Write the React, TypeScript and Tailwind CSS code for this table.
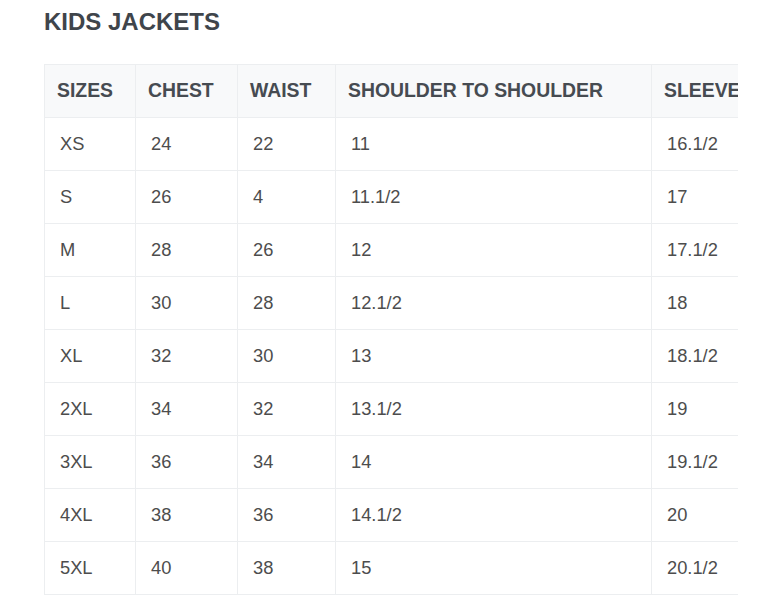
import React from "react";

const rows: string[][] = [
  ["XS", "24", "22", "11", "16.1/2"],
  ["S", "26", "4", "11.1/2", "17"],
  ["M", "28", "26", "12", "17.1/2"],
  ["L", "30", "28", "12.1/2", "18"],
  ["XL", "32", "30", "13", "18.1/2"],
  ["2XL", "34", "32", "13.1/2", "19"],
  ["3XL", "36", "34", "14", "19.1/2"],
  ["4XL", "38", "36", "14.1/2", "20"],
  ["5XL", "40", "38", "15", "20.1/2"],
];

const headers = ["SIZES", "CHEST", "WAIST", "SHOULDER TO SHOULDER", "SLEEVE LENGTH"];

export default function App() {
  return (
    <div
      className="w-[770px] h-[603px] bg-white overflow-hidden"
      style={{ fontFamily: '"Liberation Sans", Arial, sans-serif' }}
    >
      <div className="pl-[44px] pt-[8px]">
        <h2 className="text-[24px] leading-[28px] font-bold text-[#3f454b]">KIDS JACKETS</h2>
        <div className="mt-[28px] w-[694px] overflow-hidden">
          <table className="border-collapse table-fixed w-[800px]">
            <colgroup>
              <col className="w-[91px]" />
              <col className="w-[102px]" />
              <col className="w-[98px]" />
              <col className="w-[316px]" />
              <col className="w-[193px]" />
            </colgroup>
            <thead>
              <tr className="bg-[#f8f9fa]">
                {headers.map((h) => (
                  <th
                    key={h}
                    className="h-[53px] border border-[#eceef0] pl-[12px] text-left align-middle text-[19.4px] font-bold text-[#464b51] whitespace-nowrap"
                  >
                    {h}
                  </th>
                ))}
              </tr>
            </thead>
            <tbody>
              {rows.map((r) => (
                <tr key={r[0]}>
                  {r.map((c, i) => (
                    <td
                      key={i}
                      className="h-[53px] border border-[#eceef0] pl-[15px] text-left align-middle text-[18.3px] text-[#4d4d4d] whitespace-nowrap"
                    >
                      {c}
                    </td>
                  ))}
                </tr>
              ))}
            </tbody>
          </table>
        </div>
      </div>
    </div>
  );
}
